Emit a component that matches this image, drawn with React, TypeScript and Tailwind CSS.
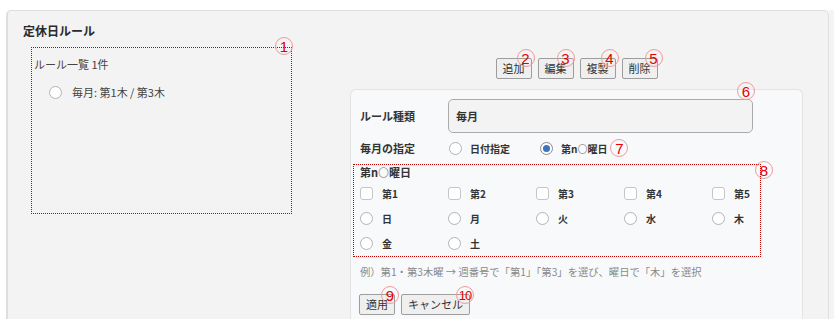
import React from "react";

function Badge({ n, cls }: { n: string; cls: string }) {
  return (
    <span
      className={`absolute z-10 w-[18px] h-[18px] rounded-full border border-[#f19a9a] text-[#e60000] font-normal flex items-center justify-center leading-none font-['Liberation_Sans',sans-serif] ${cls}`}
    >
      {n}
    </span>
  );
}

function Radio({ checked }: { checked?: boolean }) {
  return (
    <span
      className={`w-[13px] h-[13px] rounded-full border bg-white flex items-center justify-center shrink-0 ${
        checked ? "border-[#8a8a8a]" : "border-[#b3b3b3]"
      }`}
    >
      {checked && <span className="w-[7px] h-[7px] rounded-full bg-[#3a74c2]" />}
    </span>
  );
}

function Check() {
  return <span className="w-[13px] h-[13px] rounded-[3px] border border-[#c6c6c6] bg-white shrink-0" />;
}

function Btn({ label, badge, badgeCls }: { label: string; badge: string; badgeCls: string }) {
  return (
    <span className="relative h-[21px] px-[6px] flex items-center bg-[#efefef] border border-[#9d9d9d] rounded-[2px] text-[11px] text-[#333]">
      {label}
      <Badge n={badge} cls={badgeCls} />
    </span>
  );
}

function NthLabel() {
  return (
    <>
      第n<span className="font-normal text-[#9a9a9a]">〇</span>曜日
    </>
  );
}

export default function App() {
  const weeks = ["第1", "第2", "第3", "第4", "第5"];
  const days1 = ["日", "月", "火", "水", "木"];
  const days2 = ["金", "土"];
  return (
    <div className="w-[839px] h-[328px] bg-white flex items-start pt-[10px] pl-[6px] font-['Noto_Sans_CJK_JP',sans-serif] text-[#333]">
      <div className="w-[823px] h-[309px] bg-[#f3f3f3] border-l-2 border-t border-r border-[#dedede] rounded-t-[5px] overflow-hidden flex flex-col">
        <div className="pl-[15px] pt-[10px] h-[30px] text-[12px] font-bold leading-[20px] text-[#2a2a2a]">定休日ルール</div>
        <div className="flex pt-[6px] flex-1 min-h-0">
          {/* left list box */}
          <div className="relative ml-[23px] w-[261px] h-[167px] border border-dotted border-[#c80000] pl-[2px] pt-[8px]">
            <Badge n="1" cls="right-[-2px] top-[-11px] text-[15px]" />
            <div className="text-[11px] leading-[16px] text-[#444]">ルール一覧 1件</div>
            <div className="mt-[12px] pl-[15px] flex items-center gap-[10px] h-[16px] text-[11px] text-[#444]">
              <Radio />
              <span>毎月: 第1木 / 第3木</span>
            </div>
          </div>

          {/* right column */}
          <div className="ml-[58px] w-[453px] flex flex-col">
            <div className="pt-[11px] flex justify-center gap-[6px]">
              <Btn label="追加" badge="2" badgeCls="right-[-4px] top-[-10px] text-[15px]" />
              <Btn label="編集" badge="3" badgeCls="right-[-2px] top-[-10px] text-[15px]" />
              <Btn label="複製" badge="4" badgeCls="right-[-4px] top-[-10px] text-[15px]" />
              <Btn label="削除" badge="5" badgeCls="right-[-6px] top-[-10px] text-[15px]" />
            </div>

            <div className="mt-[10px] flex-1 bg-[#f8f9fa] border border-b-0 border-[#e4e4e4] rounded-t-[6px] pl-[9px] pt-[9px]">
              <div className="flex items-center h-[34px]">
                <span className="w-[88px] text-[11px] font-bold">ルール種類</span>
                <div className="relative w-[305px] h-[34px] bg-[#f3f3f3] border border-[#ababab] rounded-[5px] pl-[7px] flex items-center text-[11px] font-bold">
                  毎月
                  <Badge n="6" cls="right-[-3px] top-[-18px] text-[15px]" />
                </div>
              </div>

              <div className="mt-[5px] h-[20px] flex items-center">
                <span className="w-[88px] text-[11px] font-bold">毎月の指定</span>
                <div className="ml-[1px] w-[91px] flex items-center gap-[8px]">
                  <Radio />
                  <span className="text-[10px] font-bold">日付指定</span>
                </div>
                <div className="flex items-center gap-[8px]">
                  <Radio checked />
                  <span className="text-[10px] font-bold">
                    <NthLabel />
                  </span>
                </div>
                <span className="relative ml-[3px] w-[18px] h-[18px] rounded-full border border-[#f19a9a] text-[#e60000] flex items-center justify-center leading-none text-[15px] font-['Liberation_Sans',sans-serif]">
                  7
                </span>
              </div>

              <div className="relative mt-[6px] -ml-[7px] w-[408px] border border-dotted border-[#c80000] pl-[6px]">
                <Badge n="8" cls="right-[-13px] top-[-4px] text-[15px]" />
                <div className="h-[14px] text-[11px] font-bold leading-[14px]">
                  <NthLabel />
                </div>
                <div className="mt-[2px] grid grid-cols-[88px_88px_88px_88px_88px]">
                  {weeks.map((w) => (
                    <div key={w} className="h-[25px] flex items-center gap-[9px]">
                      <Check />
                      <span className="text-[10px] font-bold">{w}</span>
                    </div>
                  ))}
                  {days1.map((d) => (
                    <div key={d} className="h-[25px] flex items-center gap-[9px]">
                      <Radio />
                      <span className="text-[10px] font-bold">{d}</span>
                    </div>
                  ))}
                  {days2.map((d) => (
                    <div key={d} className="h-[25px] flex items-center gap-[9px]">
                      <Radio />
                      <span className="text-[10px] font-bold">{d}</span>
                    </div>
                  ))}
                </div>
              </div>

              <div className="mt-[8px] h-[14px] leading-[14px] text-[10.3px] text-[#8a8a8a]">
                例）第1・第3木曜 → 週番号で「第1」「第3」を選び、曜日で「木」を選択
              </div>

              <div className="mt-[15px] -ml-[1px] flex gap-[6px]">
                <Btn label="適用" badge="9" badgeCls="right-[-5px] top-[-9px] text-[15px]" />
                <Btn label="キャンセル" badge="10" badgeCls="right-[-5px] top-[-9px] text-[13px] tracking-[-1px]" />
              </div>
            </div>
          </div>
        </div>
      </div>
      <div className="w-[5px] h-[309px] bg-[#f4f4f4]" />
    </div>
  );
}
